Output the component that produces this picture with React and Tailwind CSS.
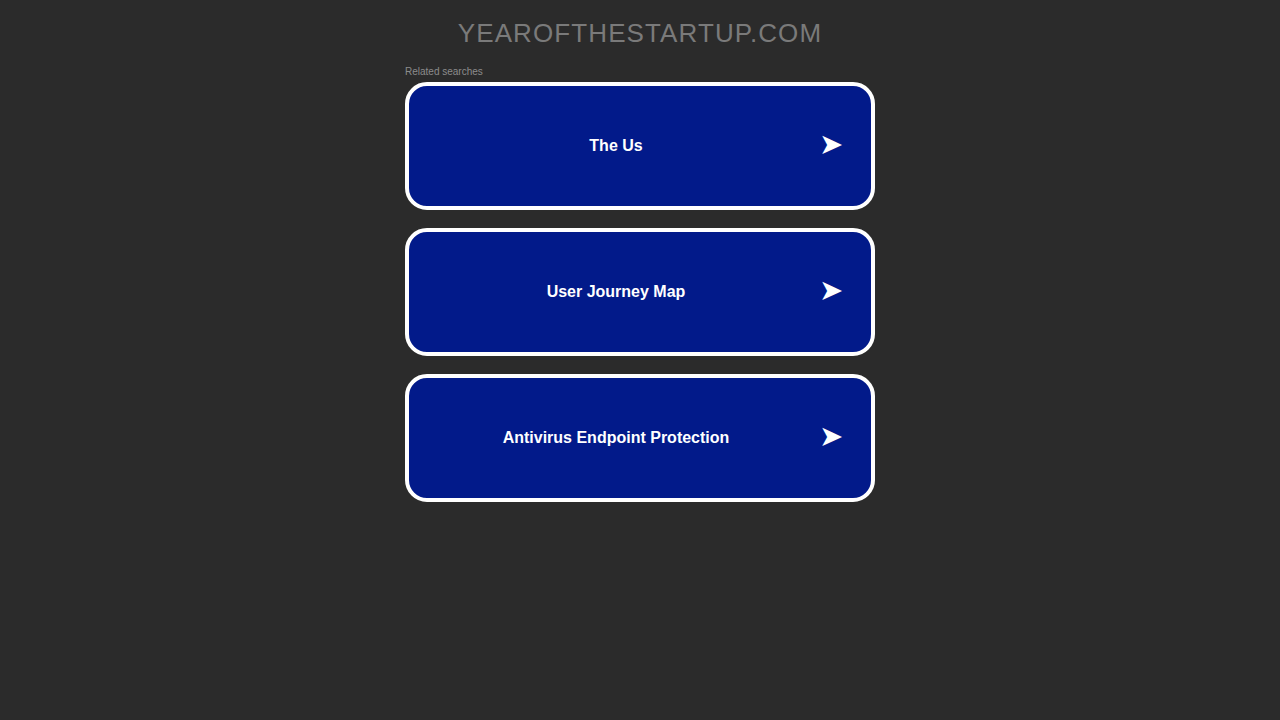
import React from "react";

const searches = ["The Us", "User Journey Map", "Antivirus Endpoint Protection"];

const SearchBox = ({ label }) => (
    <a
        href="#"
        className="flex items-center h-[128px] rounded-[22px] border-4 border-white bg-[#021a8a] text-white"
    >
        <span className="flex-1 text-center text-base font-bold">{label}</span>
        <span className="w-[24px] -ml-[4px] mr-[28px] mb-[3px] text-[29px] leading-none">➤</span>
    </a>
);

const App = () => {
    return (
        <div className="min-h-[720px] bg-[#2b2b2b] font-['Liberation_Sans',Arial,sans-serif]">
            <div className="w-[470px] mx-auto">
                <h1 className="pt-[16px] text-center text-[26px] leading-[34px] tracking-[1.1px] text-[#7a7a7a]">
                    YEAROFTHESTARTUP.COM
                </h1>
                <p className="mt-[16px] text-[10px] leading-[12px] text-[#8c8c8c]">Related searches</p>
                <div className="mt-[4px] flex flex-col gap-[18px]">
                    {searches.map(s => (
                        <SearchBox key={s} label={s} />
                    ))}
                </div>
            </div>
        </div>
    );
};

export default App;
